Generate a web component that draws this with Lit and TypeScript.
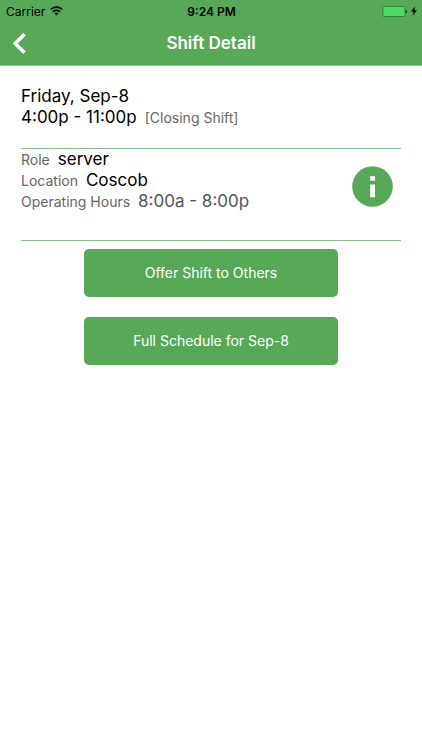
import { LitElement, html, css } from "lit";
import { customElement } from "lit/decorators.js";

@customElement("app-root")
export class AppRoot extends LitElement {
  static styles = css`
    :host {
      display: block;
      min-height: 100vh;
      background: #fff;
      color: #000;
      font-family: Inter, "Liberation Sans", sans-serif;
      --green: #57a957;
    }
    header {
      background: var(--green);
      border-bottom: 1px solid #8fc48f;
    }
    .bar {
      display: grid;
      grid-template-columns: 1fr auto 1fr;
      align-items: center;
    }
    .status {
      height: 22px;
      padding: 0 5px 0 6px;
      font-size: 12px;
    }
    .left,
    .right {
      display: flex;
      align-items: center;
      gap: 5px;
    }
    .right {
      justify-content: flex-end;
      gap: 4px;
    }
    .time {
      font-weight: 600;
    }
    .nav {
      height: 43px;
    }
    h1 {
      margin: 0;
      font-size: 17px;
      line-height: 21px;
      font-weight: 600;
      color: #fff;
    }
    svg {
      display: block;
    }
    button {
      font: inherit;
      border: 0;
      padding: 0;
      cursor: pointer;
      color: #fff;
      background: none;
    }
    .back {
      justify-self: start;
      padding: 8px 12px;
    }
    main {
      padding: 20px 21px;
    }
    section {
      border-bottom: 1px solid #8fbd8f;
      font-size: 17px;
      line-height: 21px;
    }
    p,
    dl,
    dd {
      margin: 0;
    }
    .when {
      padding-bottom: 20px;
    }
    .row {
      display: flex;
      align-items: center;
      gap: 8px;
    }
    .small {
      font-size: 14px;
      color: #666;
    }
    .muted {
      color: #555;
    }
    .info {
      display: flex;
      justify-content: space-between;
      align-items: flex-start;
      padding-bottom: 28px;
    }
    .info-button {
      margin: 17px 8px 0 0;
    }
    .actions {
      display: flex;
      flex-direction: column;
      align-items: center;
      gap: 20px;
      padding-top: 8px;
    }
    .action {
      width: 67%;
      height: 48px;
      padding-bottom: 2px;
      border-radius: 5px;
      background: var(--green);
      font-size: 14px;
    }
  `;

  render() {
    return html`
      <header>
        <div class="bar status">
          <span class="left">
            Carrier
            <svg width="13" height="10" viewBox="0 0 13 10" fill="none" stroke="#0b150b" stroke-width="1.8">
              <path d="M.7 3.4Q6.500-1.300 12.300 3.400" />
              <path d="M2.800 5.900Q6.500 2.600 10.200 5.900" />
              <path d="M4.400 7.400Q6.500 5.700 8.600 7.400L6.500 9.600Z" fill="#0b150b" stroke="none" />
            </svg>
          </span>
          <span class="time">9:24 PM</span>
          <span class="right">
            <svg width="25" height="11" viewBox="0 0 25 11">
              <rect x=".9" y=".5" width="22" height="10" rx="1" fill="#4cd964" stroke="#34863a" />
              <path d="M23.600 3.800q1.400 0 1.400 1.700t-1.400 1.700z" fill="#173317" />
            </svg>
            <svg width="6" height="10" viewBox="0 0 6 10"><path d="M4 .5 0 5.600h2.500L1.700 9.500 6 4.300H3.400Z" /></svg>
          </span>
        </div>
        <div class="bar nav">
          <button class="back" aria-label="Back">
            <svg width="15" height="22" viewBox="0 0 15 22" fill="none" stroke="#fff" stroke-width="3.600">
              <path d="M12.500 1.200 3.200 10.500l9.300 9.300" />
            </svg>
          </button>
          <h1>Shift Detail</h1>
        </div>
      </header>
      <main>
        <section class="when">
          <p>Friday, Sep-8</p>
          <p class="row"><span>4:00p - 11:00p</span><span class="small">[Closing Shift]</span></p>
        </section>
        <section class="info">
          <dl>
            <div class="row"><dt class="small">Role</dt><dd>server</dd></div>
            <div class="row"><dt class="small">Location</dt><dd>Coscob</dd></div>
            <div class="row"><dt class="small">Operating Hours</dt><dd class="muted">8:00a - 8:00p</dd></div>
          </dl>
          <button class="info-button" aria-label="Shift information">
            <svg width="41" height="41" viewBox="0 0 41 41">
              <circle cx="20.500" cy="20.500" r="20.300" fill="#57a957" />
              <path d="M18.200 10.300h4.800v4.500h-4.800zM18.200 18.400h4.800v12.800h-4.800z" fill="#fff" />
            </svg>
          </button>
        </section>
        <div class="actions">
          <button class="action">Offer Shift to Others</button>
          <button class="action">Full Schedule for Sep-8</button>
        </div>
      </main>
    `;
  }
}
